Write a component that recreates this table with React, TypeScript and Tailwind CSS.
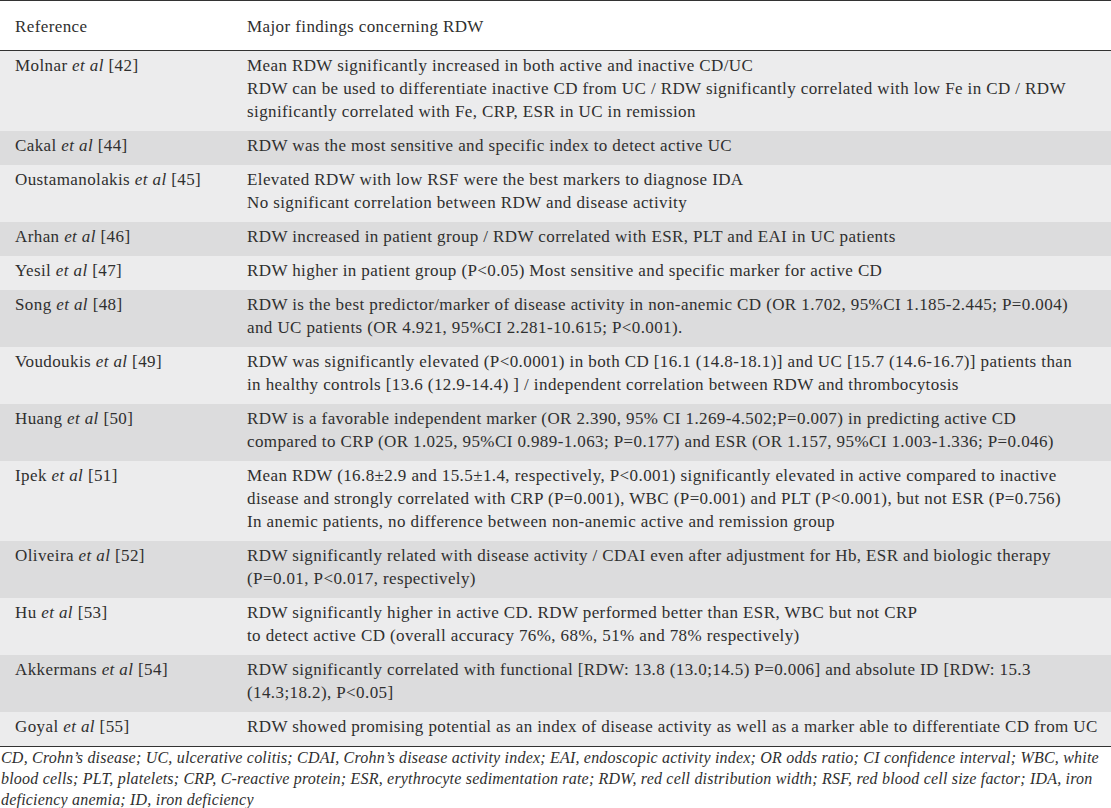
const rows: { author: string; ref: string; lines: string[] }[] = [
  {
    author: 'Molnar',
    ref: '[42]',
    lines: [
      'Mean RDW significantly increased in both active and inactive CD/UC',
      'RDW can be used to differentiate inactive CD from UC / RDW significantly correlated with low Fe in CD / RDW',
      'significantly correlated with Fe, CRP, ESR in UC in remission',
    ],
  },
  { author: 'Cakal', ref: '[44]', lines: ['RDW was the most sensitive and specific index to detect active UC'] },
  {
    author: 'Oustamanolakis',
    ref: '[45]',
    lines: [
      'Elevated RDW with low RSF were the best markers to diagnose IDA',
      'No significant correlation between RDW and disease activity',
    ],
  },
  {
    author: 'Arhan',
    ref: '[46]',
    lines: ['RDW increased in patient group / RDW correlated with ESR, PLT and EAI in UC patients'],
  },
  {
    author: 'Yesil',
    ref: '[47]',
    lines: ['RDW higher in patient group (P<0.05) Most sensitive and specific marker for active CD'],
  },
  {
    author: 'Song',
    ref: '[48]',
    lines: [
      'RDW is the best predictor/marker of disease activity in non-anemic CD (OR 1.702, 95%CI 1.185-2.445; P=0.004)',
      'and UC patients (OR 4.921, 95%CI 2.281-10.615; P<0.001).',
    ],
  },
  {
    author: 'Voudoukis',
    ref: '[49]',
    lines: [
      'RDW was significantly elevated (P<0.0001) in both CD [16.1 (14.8-18.1)] and UC [15.7 (14.6-16.7)] patients than',
      'in healthy controls [13.6 (12.9-14.4) ] / independent correlation between RDW and thrombocytosis',
    ],
  },
  {
    author: 'Huang',
    ref: '[50]',
    lines: [
      'RDW is a favorable independent marker (OR 2.390, 95% CI 1.269-4.502;P=0.007) in predicting active CD',
      'compared to CRP (OR 1.025, 95%CI 0.989-1.063; P=0.177) and ESR (OR 1.157, 95%CI 1.003-1.336; P=0.046)',
    ],
  },
  {
    author: 'Ipek',
    ref: '[51]',
    lines: [
      'Mean RDW (16.8±2.9 and 15.5±1.4, respectively, P<0.001) significantly elevated in active compared to inactive',
      'disease and strongly correlated with CRP (P=0.001), WBC (P=0.001) and PLT (P<0.001), but not ESR (P=0.756)',
      'In anemic patients, no difference between non-anemic active and remission group',
    ],
  },
  {
    author: 'Oliveira',
    ref: '[52]',
    lines: [
      'RDW significantly related with disease activity / CDAI even after adjustment for Hb, ESR and biologic therapy',
      '(P=0.01, P<0.017, respectively)',
    ],
  },
  {
    author: 'Hu',
    ref: '[53]',
    lines: [
      'RDW significantly higher in active CD. RDW performed better than ESR, WBC but not CRP',
      'to detect active CD (overall accuracy 76%, 68%, 51% and 78% respectively)',
    ],
  },
  {
    author: 'Akkermans',
    ref: '[54]',
    lines: [
      'RDW significantly correlated with functional [RDW: 13.8 (13.0;14.5) P=0.006] and absolute ID [RDW: 15.3',
      '(14.3;18.2), P<0.05]',
    ],
  },
  {
    author: 'Goyal',
    ref: '[55]',
    lines: ['RDW showed promising potential as an index of disease activity as well as a marker able to differentiate CD from UC'],
  },
];

const notes = [
  'CD, Crohn’s disease; UC, ulcerative colitis; CDAI, Crohn’s disease activity index; EAI, endoscopic activity index; OR odds ratio; CI confidence interval; WBC, white',
  'blood cells; PLT, platelets; CRP, C-reactive protein; ESR, erythrocyte sedimentation rate; RDW, red cell distribution width; RSF, red blood cell size factor; IDA, iron',
  'deficiency anemia; ID, iron deficiency',
];

export default function App() {
  return (
    <div className="w-[1111px] h-[808px] overflow-hidden bg-white text-[#2f2f2f] font-['Liberation_Serif',serif] text-[17px] leading-[23px] tracking-[0.4px]">
      <div className="border-t border-[#333]">
        <div className="flex h-[50px] items-center border-b border-[#333] pt-[1px]">
          <div className="w-[247px] shrink-0 pl-[15px]">Reference</div>
          <div>Major findings concerning RDW</div>
        </div>
        {rows.map((r, i) => (
          <div
            key={r.author}
            className={`flex pt-[3px] pb-[8px] whitespace-nowrap ${i % 2 === 0 ? 'bg-[#ececed]' : 'bg-[#dcdcdd]'}`}
          >
            <div className="w-[247px] shrink-0 pl-[15px]">
              {r.author} <i>et al</i> {r.ref}
            </div>
            <div className="flex flex-col">
              {r.lines.map((l) => (
                <span key={l}>{l}</span>
              ))}
            </div>
          </div>
        ))}
      </div>
      <div className="border-t border-[#333] pl-[1px] italic text-[16px] leading-[21px] tracking-[0.2px] whitespace-nowrap">
        {notes.map((n) => (
          <div key={n}>{n}</div>
        ))}
      </div>
    </div>
  );
}
